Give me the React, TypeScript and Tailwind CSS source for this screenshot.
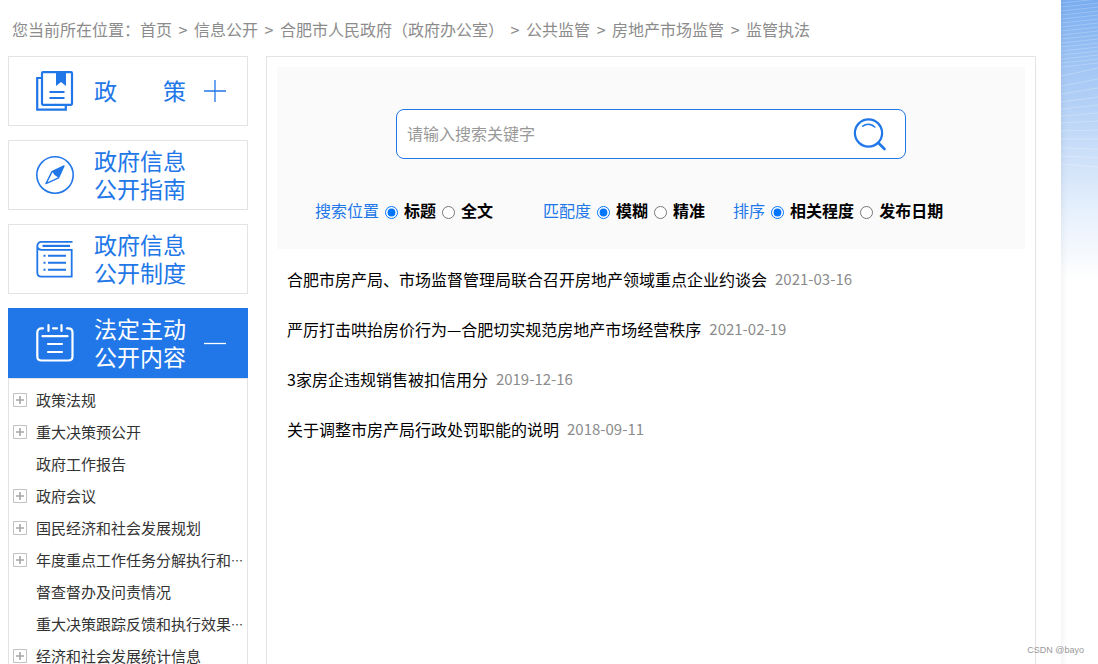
import { useState } from 'react'
import type { ReactNode } from 'react'

const crumbs = ['首页', '信息公开', '合肥市人民政府（政府办公室）', '公共监管', '房地产市场监管', '监管执法']

const tree = [
  { label: '政策法规', expandable: true },
  { label: '重大决策预公开', expandable: true },
  { label: '政府工作报告', expandable: false },
  { label: '政府会议', expandable: true },
  { label: '国民经济和社会发展规划', expandable: true },
  { label: '年度重点工作任务分解执行和', expandable: true, more: true },
  { label: '督查督办及问责情况', expandable: false },
  { label: '重大决策跟踪反馈和执行效果', expandable: false, more: true },
  { label: '经济和社会发展统计信息', expandable: true },
]

const articles = [
  { title: '合肥市房产局、市场监督管理局联合召开房地产领域重点企业约谈会', date: '2021-03-16' },
  { title: '严厉打击哄抬房价行为—合肥切实规范房地产市场经营秩序', date: '2021-02-19' },
  { title: '3家房企违规销售被扣信用分', date: '2019-12-16' },
  { title: '关于调整市房产局行政处罚职能的说明', date: '2018-09-11' },
]

function PolicyIcon() {
  return (
    <svg className="w-[38px] h-10 shrink-0" viewBox="0 0 38 40" fill="none" stroke="currentColor" strokeWidth="2.2">
      <path d="M6 7H1.2v31.6h28.6V34" />
      <rect x="6" y="1.2" width="30" height="32.6" rx="1" />
      <path d="M20 1h10v14l-5-4-5 4z" fill="currentColor" stroke="none" />
      <path d="M13.5 21h15M13.5 27h15" />
    </svg>
  )
}

function CompassIcon() {
  return (
    <svg className="w-[38px] h-10 shrink-0" viewBox="0 0 38 40" fill="none" stroke="currentColor" strokeWidth="1.6" strokeLinejoin="round">
      <circle cx="19" cy="20" r="18.2" />
      <path d="M28 11L16 16.6 10 28.6 22.6 22.8z" strokeWidth="1.4" />
      <path d="M28 11L16 16.6l2.6 3.4 4 2.8z" fill="currentColor" stroke="none" />
    </svg>
  )
}

function BookIcon() {
  return (
    <svg className="w-[38px] h-10 shrink-0" viewBox="0 0 38 40" fill="none" stroke="currentColor" strokeWidth="1.8">
      <path d="M36.5 2.9H5.5C3 2.9 1.3 4.6 1.3 7v26.5c0 2.5 1.7 4.2 4.2 4.2h30.2V10.8H5.5C3 10.8 1.3 9.3 1.3 7" />
      <path d="M6.5 6.9H34" strokeWidth="2.2" />
      <path d="M12 16.7h18M12 23.7h18M12 30.7h18" strokeWidth="2" />
      <path d="M7.5 16.7h2M7.5 23.7h2M7.5 30.7h2" strokeWidth="2" />
    </svg>
  )
}

function NotepadIcon() {
  return (
    <svg className="w-[38px] h-10 shrink-0" viewBox="0 0 38 40" fill="none" stroke="currentColor" strokeWidth="2.2" strokeLinecap="round">
      <path d="M7 5.3H5.5C3 5.3 1.3 7 1.3 9.5v23.7c0 2.6 1.7 4.3 4.2 4.3h26.7c2.6 0 4.3-1.7 4.3-4.3V9.5c0-2.5-1.7-4.2-4.3-4.2h-1.3" />
      <path d="M12.5 2v6M25.5 2v6M17 5.3h4" />
      <path d="M6.5 13.2h25M12 21h14M12 29h14" />
    </svg>
  )
}

function MenuBlock({ icon, title, sign, active }: { icon: ReactNode; title: ReactNode; sign?: 'plus' | 'minus'; active?: boolean }) {
  return (
    <button
      type="button"
      className={`w-full h-[70px] flex items-center pl-[27px] border text-left text-[23px] leading-7 ${
        active ? 'bg-[#2177e8] border-[#2177e8] text-white' : 'bg-white border-[#e3e3e3] text-[#2177e8]'
      }`}
    >
      {icon}
      <span className="ml-5 pb-0.5 whitespace-nowrap">{title}</span>
      {sign && (
        <svg className="ml-[18px] w-[22px] h-[22px]" viewBox="0 0 22 22" stroke="currentColor" strokeWidth="1.3">
          <path d={sign === 'plus' ? 'M0 11h22M11 0v22' : 'M0 11.5h22'} />
        </svg>
      )}
    </button>
  )
}

function OptionGroup({ name, legend, options, className }: { name: string; legend: string; options: string[]; className?: string }) {
  const [value, setValue] = useState(options[0])

  return (
    <div role="radiogroup" aria-label={legend} className={`flex items-center gap-1.5 ${className ?? ''}`}>
      <span className="text-[#2177e8]">{legend}</span>
      {options.map((option) => (
        <label key={option} className="flex items-center gap-1.5 font-bold text-black">
          <input
            type="radio"
            name={name}
            className="w-[13px] h-[13px] mt-1"
            checked={value === option}
            onChange={() => setValue(option)}
          />
          {option}
        </label>
      ))}
    </div>
  )
}

// Sky banner with fine wave lines that shows beside the page column
function Backdrop() {
  const fine = Array.from({ length: 17 }, (_, i) => i * 4)
  const wide = [76, 86, 94, 102, 109, 116, 123, 131, 139, 148, 156, 164]

  return (
    <div className="w-[37px] shrink-0 bg-white">
      <svg className="block w-full h-[280px]" viewBox="0 0 37 280" preserveAspectRatio="none" fill="none">
        <defs>
          <linearGradient id="sky" x1="0" y1="0" x2="0" y2="1">
            <stop offset="0" stopColor="#79adf0" />
            <stop offset="0.25" stopColor="#a3c7f5" />
            <stop offset="0.5" stopColor="#c5dbf8" />
            <stop offset="0.75" stopColor="#e6f0fc" />
            <stop offset="1" stopColor="#ffffff" />
          </linearGradient>
          <linearGradient id="edge" x1="0" y1="0" x2="1" y2="0">
            <stop offset="0" stopColor="#000" stopOpacity="0.04" />
            <stop offset="1" stopColor="#000" stopOpacity="0" />
          </linearGradient>
        </defs>
        <rect width="37" height="280" fill="url(#sky)" />
        {fine.map((y) => (
          <path key={y} d={`M0 ${y + 3}Q20 ${y + 1} 37 ${y - 1}`} stroke="#fff" strokeOpacity="0.22" />
        ))}
        {wide.map((y, i) => (
          <path key={y} d={`M0 ${y}Q20 ${y - 4 + i / 2} 37 ${y - 8 + i}`} stroke="#fff" strokeOpacity="0.25" />
        ))}
        <rect width="6" height="280" fill="url(#edge)" />
      </svg>
      <div className="w-1.5 h-full bg-linear-to-r from-black/4 to-transparent" />
    </div>
  )
}

function App() {
  const [keyword, setKeyword] = useState('')

  return (
    <div className="relative h-screen overflow-hidden flex bg-white text-base font-['Noto_Sans_CJK_SC',sans-serif]">
      <div className="flex-1 min-w-0 pl-2 pr-[25px] flex flex-col">
        <nav className="h-14 pt-0.5 pl-1 shrink-0 flex items-center whitespace-nowrap text-[#8c8c8c]">
          <span>您当前所在位置：</span>
          {crumbs.map((crumb, i) => (
            <span key={crumb} className="flex items-center">
              {i > 0 && <span className="w-[22px] text-center">&gt;</span>}
              <a href="#">{crumb}</a>
            </span>
          ))}
        </nav>

        <div className="flex-1 min-h-0 flex gap-[18px]">
          {/* Sidebar */}
          <aside className="w-60 shrink-0">
            <div className="flex flex-col gap-3.5">
              <MenuBlock icon={<PolicyIcon />} title="政　　策" sign="plus" />
              <MenuBlock icon={<CompassIcon />} title={<>政府信息<br />公开指南</>} />
              <MenuBlock icon={<BookIcon />} title={<>政府信息<br />公开制度</>} />
              <MenuBlock icon={<NotepadIcon />} title={<>法定主动<br />公开内容</>} sign="minus" active />
            </div>
            <ul className="border border-[#e3e3e3] pt-[5px] pl-1">
              {tree.map((item) => (
                <li key={item.label} className="h-8 flex items-center gap-[9px]">
                  <svg className="w-3.5 h-3.5 shrink-0" viewBox="0 0 14 14" fill="none">
                    {item.expandable && (
                      <>
                        <rect x="0.5" y="0.5" width="13" height="13" stroke="#c4c4c4" />
                        <path d="M3 7h8M7 3v8" stroke="#a6a6a6" strokeWidth="1.6" />
                      </>
                    )}
                  </svg>
                  <a href="#" className="text-[15px] text-[#333] whitespace-nowrap">
                    {item.label}
                    {item.more && <span className="text-xs">…</span>}
                  </a>
                </li>
              ))}
            </ul>
          </aside>

          {/* Main Content */}
          <main className="flex-1 min-w-0 border border-b-0 border-[#e3e3e3] p-2.5">
            <form className="bg-[#fafafa] pt-[42px] h-[182px]" onSubmit={(e) => e.preventDefault()}>
              <div className="w-[510px] h-[50px] mx-auto flex items-center bg-white border border-[#2177e8] rounded-lg">
                <input
                  type="text"
                  aria-label="请输入搜索关键字"
                  placeholder="请输入搜索关键字"
                  className="flex-1 min-w-0 h-full pl-2.5 pb-0.5 outline-none placeholder:text-[#999]"
                  value={keyword}
                  onChange={(e) => setKeyword(e.target.value)}
                />
                <button type="submit" aria-label="搜索" className="mr-[18px]">
                  <svg className="w-[34px] h-[34px]" viewBox="0 0 34 34" fill="none" stroke="#2177e8" strokeLinecap="round">
                    <circle cx="15.5" cy="16" r="13.6" strokeWidth="2.2" />
                    <path d="M25.5 26l6 6" strokeWidth="2.6" />
                    <path d="M9.8 9.2c3.6-2.7 8.4-2.5 12 .8" strokeWidth="1.6" />
                  </svg>
                </button>
              </div>
              <div className="mt-[39px] pl-[38px] flex whitespace-nowrap">
                <OptionGroup name="scope" legend="搜索位置" options={['标题', '全文']} />
                <OptionGroup name="match" legend="匹配度" options={['模糊', '精准']} className="ml-[50px]" />
                <OptionGroup name="sort" legend="排序" options={['相关程度', '发布日期']} className="ml-7" />
              </div>
            </form>

            <ul className="pt-[5px] pl-2.5">
              {articles.map((article) => (
                <li key={article.title} className="h-[50px] flex items-center gap-2">
                  <a href="#" className="text-black">{article.title}</a>
                  <span className="text-[15px] text-[#8c8c8c]">{article.date}</span>
                </li>
              ))}
            </ul>
          </main>
        </div>
      </div>

      <Backdrop />

      <span className="absolute right-3.5 bottom-1.5 text-[9px] leading-4 text-[#999] font-['Liberation_Sans',sans-serif]">
        CSDN @bayo
      </span>
    </div>
  )
}

export default App
